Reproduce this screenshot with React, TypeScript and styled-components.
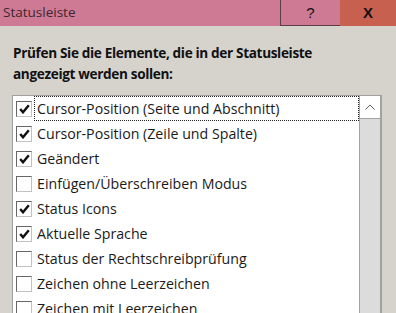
import React from 'react'
import styled, { createGlobalStyle } from 'styled-components'

const GlobalStyle = createGlobalStyle`
  html, body {
    margin: 0;
    padding: 0;
    height: 313px;
    overflow: hidden;
    background: #d6d3cd;
  }
  body {
    font-family: "Open Sans", "Noto Sans", "Liberation Sans", sans-serif;
  }
`

const Window = styled.div`
  display: flex;
  flex-direction: column;
  width: 396px;
  height: 313px;
  background: #d6d3cd;
  overflow: hidden;
`

const TitleBar = styled.div`
  display: flex;
  height: 26px;
  flex-shrink: 0;
  background: #cf7a95;
`

const Title = styled.div`
  flex: 1;
  padding-left: 3px;
  font-size: 13.5px;
  line-height: 25px;
  color: #3b2730;
`

const CaptionButton = styled.div<{ $close?: boolean }>`
  display: flex;
  align-items: center;
  justify-content: center;
  width: ${(p) => (p.$close ? '56px' : '59px')};
  height: 25px;
  background: ${(p) => (p.$close ? '#c8604f' : '#cf7a95')};
  border-left: ${(p) => (p.$close ? 'none' : '1px solid #5d3d46')};
  border-bottom: 1px solid ${(p) => (p.$close ? '#c8604f' : '#5d3d46')};
  font-family: "Liberation Sans", sans-serif;
  font-size: 15px;
  font-weight: ${(p) => (p.$close ? 'bold' : 'normal')};
  color: #111;
`

const Content = styled.div`
  display: flex;
  flex-direction: column;
  padding: 16px 14px 0 12px;
`

const Prompt = styled.div`
  padding-left: 1px;
  font-size: 13.6px;
  font-weight: bold;
  letter-spacing: -0.35px;
  line-height: 21px;
  color: #111;
`

const ListBox = styled.div`
  display: flex;
  margin-top: 11px;
  border: 1px solid #a0a0a0;
  background: #fff;
  height: 260px;
`

const Items = styled.div`
  flex: 1;
  display: flex;
  flex-direction: column;
`

const Row = styled.div`
  display: flex;
  align-items: center;
  gap: 2px;
  height: 25px;
  padding-left: 3px;
  font-size: 14.2px;
  color: #1a1a1a;
  white-space: nowrap;
`

const Label = styled.span<{ $focused?: boolean }>`
  align-self: stretch;
  display: flex;
  align-items: center;
  flex: 1;
  box-sizing: border-box;
  border: 1px dotted ${(p) => (p.$focused ? '#222' : 'transparent')};
  padding-left: 2px;
`

const Box = styled.span`
  display: flex;
  align-items: center;
  justify-content: center;
  box-sizing: border-box;
  width: 16px;
  height: 16px;
  flex-shrink: 0;
  border-top: 1px solid #666;
  border-left: 1px solid #666;
  border-right: 1px solid #c2c2c2;
  border-bottom: 1px solid #c2c2c2;
  background: #fff;
`

const Scrollbar = styled.div`
  display: flex;
  flex-direction: column;
  width: 20px;
  border-left: 1px solid #a3a3a3;
  border-right: 1px solid #a3a3a3;
  background: #dcdcdc;
`

const ArrowButton = styled.div`
  display: flex;
  align-items: center;
  justify-content: center;
  height: 22px;
  background: #fff;
  border-bottom: 1px solid #a3a3a3;
`

const Check = () => (
  <svg width="11" height="10" viewBox="0 0 11 10">
    <path d="M1.2 5 L4 8.3 L9.8 1.2" fill="none" stroke="#111" strokeWidth="2.4" />
  </svg>
)

const items = [
  { label: 'Cursor-Position (Seite und Abschnitt)', checked: true },
  { label: 'Cursor-Position (Zeile und Spalte)', checked: true },
  { label: 'Geändert', checked: true },
  { label: 'Einfügen/Überschreiben Modus', checked: false },
  { label: 'Status Icons', checked: true },
  { label: 'Aktuelle Sprache', checked: true },
  { label: 'Status der Rechtschreibprüfung', checked: false },
  { label: 'Zeichen ohne Leerzeichen', checked: false },
  { label: 'Zeichen mit Leerzeichen', checked: false },
  { label: 'Wörter', checked: true },
]

const App = () => (
  <>
    <GlobalStyle />
    <Window>
      <TitleBar>
        <Title>Statusleiste</Title>
        <CaptionButton>?</CaptionButton>
        <CaptionButton $close>X</CaptionButton>
      </TitleBar>
      <Content>
        <Prompt>
          Prüfen Sie die Elemente, die in der Statusleiste
          <br />
          angezeigt werden sollen:
        </Prompt>
        <ListBox>
          <Items>
            {items.map((it, i) => (
              <Row key={it.label}>
                <Box>{it.checked && <Check />}</Box>
                <Label $focused={i === 0}>{it.label}</Label>
              </Row>
            ))}
          </Items>
          <Scrollbar>
            <ArrowButton>
              <svg width="10" height="6" viewBox="0 0 10 6">
                <path d="M0.5 5.5 L5 1 L9.5 5.5" fill="none" stroke="#606060" strokeWidth="1" />
              </svg>
            </ArrowButton>
          </Scrollbar>
        </ListBox>
      </Content>
    </Window>
  </>
)

export default App
